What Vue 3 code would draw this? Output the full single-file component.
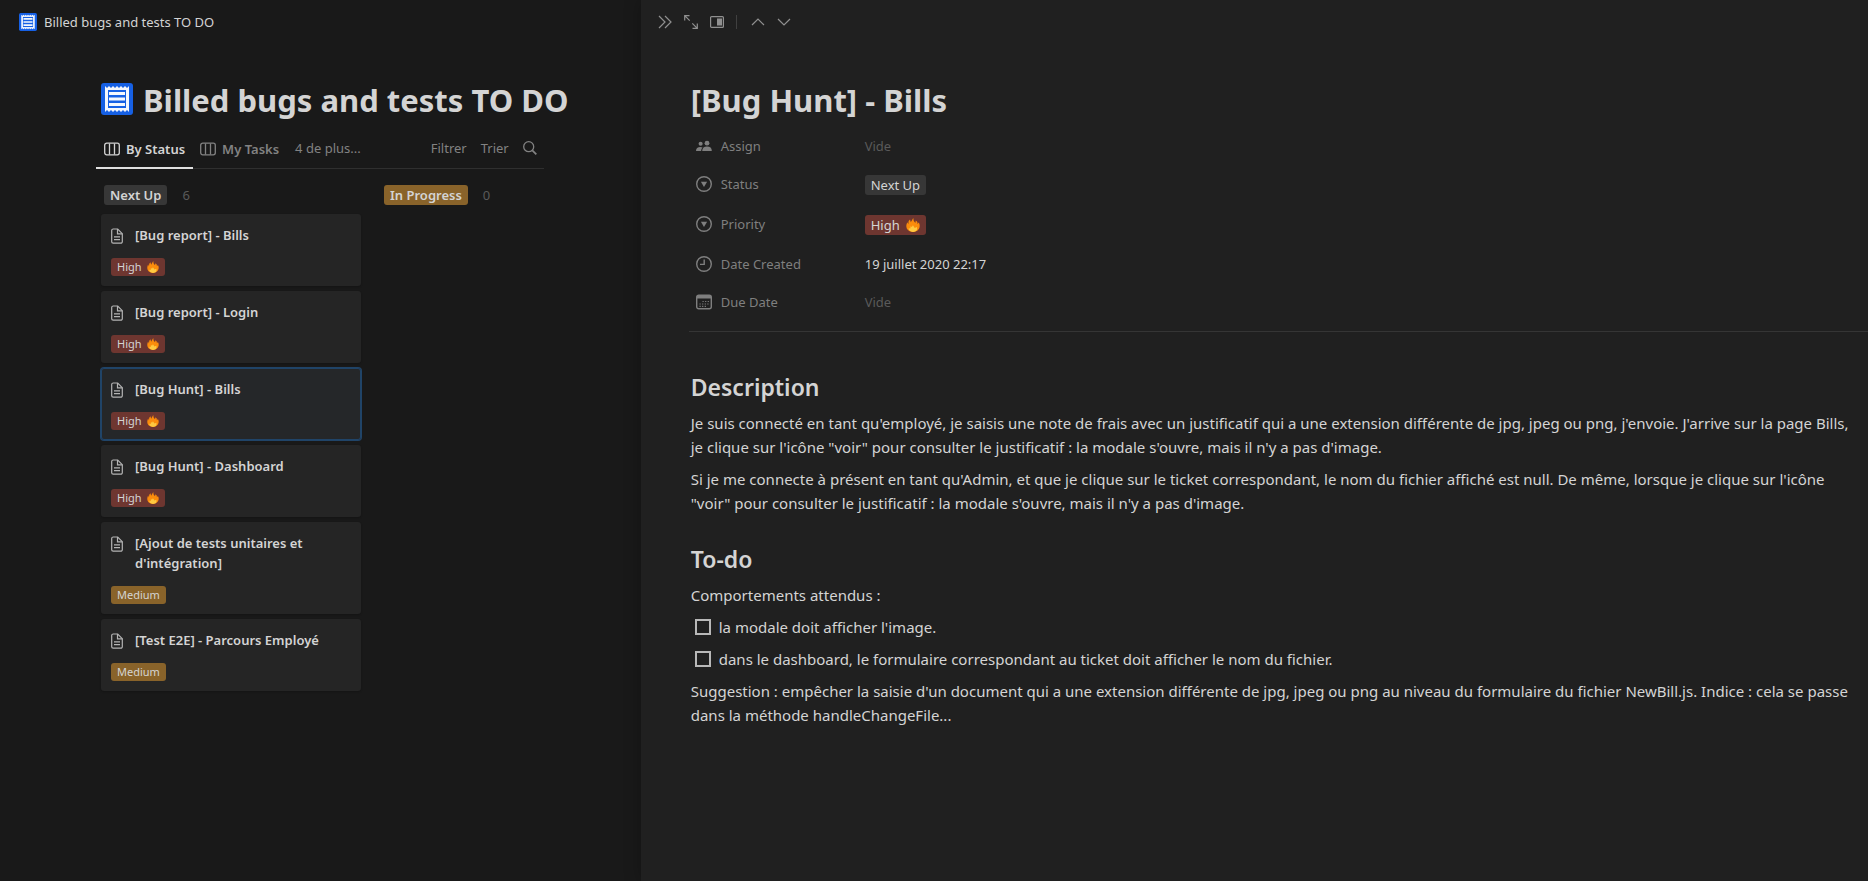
<script setup>
import { ref } from 'vue'

const cards = [
  { id: 1, title: '[Bug report] - Bills', priority: 'High' },
  { id: 2, title: '[Bug report] - Login', priority: 'High' },
  { id: 3, title: '[Bug Hunt] - Bills', priority: 'High' },
  { id: 4, title: '[Bug Hunt] - Dashboard', priority: 'High' },
  { id: 5, title: "[Ajout de tests unitaires et d'intégration]", priority: 'Medium' },
  { id: 6, title: '[Test E2E] - Parcours Employé', priority: 'Medium' },
]
const selected = ref(3)

const todos = ref([
  { id: 'todo-image', text: "la modale doit afficher l'image.", done: false },
  {
    id: 'todo-file',
    text: 'dans le dashboard, le formulaire correspondant au ticket doit afficher le nom du fichier.',
    done: false,
  },
])
</script>

<template>
  <div class="app">
    <svg class="defs" aria-hidden="true">
      <symbol id="receipt" viewBox="0 0 32 32">
        <rect width="32" height="32" rx="3" fill="#1660e4" />
        <path
          d="M4 3l2 2 2-2 2 2 2-2 2 2 2-2 2 2 2-2 2 2 2-2 2 2 2-2v26l-2-2-2 2-2-2-2 2-2-2-2 2-2-2-2 2-2-2-2 2-2-2-2 2z"
          fill="#f4f7fd"
        />
        <rect x="7" y="7" width="18" height="18" fill="#1660e4" />
        <path d="M8 10.500h16M8 16h16M8 21.500h16" stroke="#f4f7fd" stroke-width="3" />
      </symbol>
      <symbol id="fire" viewBox="0 0 16 16">
        <path
          d="M8 16C3.500 16 .6 13.300.4 9.800.3 8 .8 6 1.600 4.800l1 2.400L3 3.500l1.600-1.800.9 3.200L8.300 0l.5 3.200 1.900 2.600.5-2.900 1.800 1.700.2 2.300 1.400-1.700c.9 1.500 1.200 3 1 4.600C15.200 13.400 12.400 16 8 16z"
          fill="#fb8c0c"
        />
        <path
          d="M8 15.900c-3.200 0-5-1.600-5-4.100l1.900.3.400-2.700 1.400 1 1.200-2.100 2.100 3.100 2.300-1c1.400 3-.6 5.500-4.300 5.500z"
          fill="#fec941"
        />
      </symbol>
      <symbol id="board" viewBox="0 0 16 14">
        <g fill="none" stroke="currentColor" stroke-width="1.300">
          <rect x="0.700" y="1.200" width="14.600" height="11.600" rx="2" />
          <path d="M5.500 1.500v11M10.500 1.500v11" />
        </g>
      </symbol>
      <symbol id="page" viewBox="0 0 12 16">
        <g fill="none" stroke="currentColor" stroke-width="1.200">
          <path d="M2.400 1h4.300L11.300 5.700v8a1.500 1.500 0 0 1-1.500 1.500H2.200a1.500 1.500 0 0 1-1.500-1.500V2.500A1.500 1.500 0 0 1 2.400 1z" />
          <path d="M6.500 1v4.900h4.800M3 8.800h6M3 11.600h6" />
        </g>
      </symbol>
      <symbol id="select" viewBox="0 0 16 16">
        <circle cx="8" cy="8" r="7.300" fill="none" stroke="currentColor" stroke-width="1.400" />
        <path d="M4.900 5.700h6.200L8 10.900z" fill="currentColor" />
      </symbol>
    </svg>

    <main class="board">
      <header class="crumbs">
        <a href="#" class="crumb">
          <svg class="crumb-icon" aria-hidden="true"><use href="#receipt" /></svg>
          Billed bugs and tests TO DO
        </a>
      </header>

      <div class="board-body">
        <h1 class="board-title">
          <svg class="board-icon" aria-hidden="true"><use href="#receipt" /></svg>
          Billed bugs and tests TO DO
        </h1>

        <nav class="views">
          <button type="button" class="view active">
            <svg class="view-icon" aria-hidden="true"><use href="#board" /></svg>By Status
          </button>
          <button type="button" class="view">
            <svg class="view-icon" aria-hidden="true"><use href="#board" /></svg>My Tasks
          </button>
          <button type="button" class="more">4 de plus...</button>
          <span class="spacer"></span>
          <button type="button" class="tool">Filtrer</button>
          <button type="button" class="tool">Trier</button>
          <button type="button" class="tool search" aria-label="Rechercher">
            <svg width="14" height="14" viewBox="0 0 14 14" fill="none" stroke="currentColor" aria-hidden="true">
              <circle cx="5.700" cy="5.700" r="5" stroke-width="1.300" />
              <path d="M9.300 9.300l4 4" stroke-width="1.800" />
            </svg>
          </button>
        </nav>

        <div class="columns">
          <section class="column">
            <h2 class="column-head"><span class="tag gray">Next Up</span><span class="count">6</span></h2>
            <a
              v-for="card in cards"
              :key="card.id"
              href="#"
              class="card"
              :class="{ selected: card.id === selected }"
              @click.prevent="selected = card.id"
            >
              <span class="card-title">
                <svg class="page-icon" aria-hidden="true"><use href="#page" /></svg>
                <span>{{ card.title }}</span>
              </span>
              <span class="tag small" :class="card.priority === 'High' ? 'red' : 'orange'">
                {{ card.priority }}
                <svg v-if="card.priority === 'High'" class="fire" aria-hidden="true"><use href="#fire" /></svg>
              </span>
            </a>
          </section>
          <section class="column">
            <h2 class="column-head"><span class="tag orange">In Progress</span><span class="count">0</span></h2>
          </section>
        </div>
      </div>
    </main>

    <aside class="peek">
      <div class="peek-bar">
        <button type="button" aria-label="Fermer">
          <svg width="14" height="14" viewBox="0 0 14 14"><path d="M1 1l6 6-6 6M7 1l6 6-6 6" /></svg>
        </button>
        <button type="button" aria-label="Ouvrir en pleine page">
          <svg width="14" height="14" viewBox="0 0 14 14">
            <path d="M.7 5.500V.7h4.800M.7.7l5 5M8.500 13.300h4.800V8.500M13.300 13.300l-5-5" />
          </svg>
        </button>
        <button type="button" aria-label="Mode d'affichage">
          <svg width="14" height="14" viewBox="0 0 14 14">
            <rect x="0.600" y="1.600" width="12.800" height="10.800" rx="1" />
            <path d="M7 3.500h5v7H7z" class="solid" />
          </svg>
        </button>
        <span class="bar-divider"></span>
        <button type="button" aria-label="Page précédente">
          <svg width="14" height="14" viewBox="0 0 14 14"><path d="M1 10l6-6 6 6" /></svg>
        </button>
        <button type="button" aria-label="Page suivante">
          <svg width="14" height="14" viewBox="0 0 14 14"><path d="M1 4l6 6 6-6" /></svg>
        </button>
      </div>

      <article class="page">
        <h1 class="page-title">[Bug Hunt] - Bills</h1>

        <dl class="props">
          <div class="prop">
            <dt>
              <svg class="prop-icon" viewBox="0 0 18 16" fill="currentColor" aria-hidden="true">
                <circle cx="5.200" cy="5.500" r="2.300" />
                <circle cx="12.400" cy="4.800" r="2.700" />
                <path d="M0 13.500c0-2.900 1.800-4.300 4.800-4.300 1 0 1.900.2 2.600.6-1 .9-1.500 2.100-1.600 3.700z" />
                <path d="M7 13.500c0-3.200 2-4.800 5.400-4.800s5.400 1.600 5.400 4.800z" />
              </svg>
              Assign
            </dt>
            <dd class="empty">Vide</dd>
          </div>
          <div class="prop">
            <dt><svg class="prop-icon" aria-hidden="true"><use href="#select" /></svg>Status</dt>
            <dd class="tagged"><span class="tag gray plain">Next Up</span></dd>
          </div>
          <div class="prop">
            <dt><svg class="prop-icon" aria-hidden="true"><use href="#select" /></svg>Priority</dt>
            <dd class="tagged">
              <span class="tag red plain">High <svg class="fire big" aria-hidden="true"><use href="#fire" /></svg></span>
            </dd>
          </div>
          <div class="prop">
            <dt>
              <svg class="prop-icon" viewBox="0 0 16 16" fill="none" stroke="currentColor" stroke-width="1.400" aria-hidden="true">
                <circle cx="8" cy="8" r="7.300" />
                <path d="M8.200 3.500v4.900H4" />
              </svg>
              Date Created
            </dt>
            <dd>19 juillet 2020 22:17</dd>
          </div>
          <div class="prop">
            <dt>
              <svg class="prop-icon" viewBox="0 0 16 16" fill="none" stroke="currentColor" aria-hidden="true">
                <rect x="0.700" y="1.200" width="14.600" height="13.600" rx="2" stroke-width="1.400" />
                <path d="M1 3h14" stroke-width="3" />
                <path d="M6.500 7.500h6.500M3.500 10h9.500M3.500 12.300h7" stroke-width="1.200" stroke-dasharray="1.200 1.400" />
              </svg>
              Due Date
            </dt>
            <dd class="empty">Vide</dd>
          </div>
        </dl>

        <div class="content">
          <h2>Description</h2>
          <p>
            Je suis connecté en tant qu'employé, je saisis une note de frais avec un justificatif qui a une extension
            différente de jpg, jpeg ou png, j'envoie. J'arrive sur la page Bills, je clique sur l'icône "voir" pour
            consulter le justificatif : la modale s'ouvre, mais il n'y a pas d'image.
          </p>
          <p>
            Si je me connecte à présent en tant qu'Admin, et que je clique sur le ticket correspondant, le nom du
            fichier affiché est null. De même, lorsque je clique sur l'icône "voir" pour consulter le justificatif : la
            modale s'ouvre, mais il n'y a pas d'image.
          </p>
          <h2>To-do</h2>
          <p>Comportements attendus :</p>
          <div v-for="todo in todos" :key="todo.id" class="todo">
            <input :id="todo.id" v-model="todo.done" type="checkbox" />
            <label :for="todo.id">{{ todo.text }}</label>
          </div>
          <p>
            Suggestion : empêcher la saisie d'un document qui a une extension différente de jpg, jpeg ou png au niveau
            du formulaire du fichier NewBill.js. Indice : cela se passe dans la méthode handleChangeFile...
          </p>
        </div>
      </article>
    </aside>
  </div>
</template>

<style>
body {
  background: #191919;
}
</style>

<style scoped>
.app {
  display: grid;
  grid-template-columns: minmax(0, 343fr) minmax(0, 657fr);
  min-height: 100vh;
  background: #191919;
  color: #d4d4d4;
  font: 13px/20px "Noto Sans", "Open Sans", sans-serif;
}
.defs {
  position: absolute;
  width: 0;
  height: 0;
}
h1,
h2,
p,
dl,
dd {
  margin: 0;
}
button {
  padding: 0;
  border: 0;
  background: none;
  color: inherit;
  font: inherit;
  cursor: pointer;
}
a {
  color: inherit;
  text-decoration: none;
}
svg {
  flex: none;
}

/* Board */
.crumbs {
  display: flex;
  align-items: center;
  height: 44px;
  padding-left: 19px;
}
.crumb {
  display: flex;
  align-items: center;
  gap: 7px;
}
.crumb-icon {
  width: 18px;
  height: 18px;
}
.board-body {
  padding: 34px 97px 0 96px;
}
.board-title {
  display: flex;
  align-items: center;
  gap: 10px;
  padding-left: 5px;
  font-size: 31px;
  line-height: 44px;
  font-weight: 700;
  white-space: nowrap;
}
.board-icon {
  width: 32px;
  height: 32px;
  margin-bottom: 2px;
}
.views {
  display: flex;
  height: 40px;
  margin-top: 6px;
  border-bottom: 1px solid #2f2f2f;
  color: #828282;
  white-space: nowrap;
}
.view {
  display: flex;
  align-items: center;
  gap: 6px;
  height: 41px;
  padding: 2px 8px 0 7px;
  border-bottom: 2px solid transparent;
  font-weight: 600;
}
.view.active {
  border-bottom-color: #e0e0e0;
  color: #d4d4d4;
  padding-left: 8px;
}
.view-icon {
  width: 16px;
  height: 14px;
}
.more {
  margin-left: 8px;
}
.spacer {
  flex: 1;
}
.tool {
  margin-left: 14px;
}
.search {
  display: flex;
  align-items: center;
  margin-right: 7px;
}
.columns {
  display: flex;
  gap: 23px;
  padding: 12px 5px 0;
}
.column {
  display: flex;
  flex: none;
  flex-direction: column;
  gap: 5px;
  width: 260px;
}
.column:last-child {
  flex: 1;
  width: auto;
}
.column-head {
  display: flex;
  align-items: center;
  gap: 15px;
  height: 28px;
  padding-left: 3px;
  font-size: 13px;
  line-height: 20px;
}
.column:last-child .column-head {
  padding-left: 0;
}
.count {
  color: #5a5a5a;
  font-weight: 400;
}
.tag {
  display: inline-flex;
  align-items: center;
  gap: 6px;
  height: 20px;
  padding: 0 6px;
  border-radius: 3px;
  font-weight: 600;
  white-space: nowrap;
}
.tag.plain {
  font-weight: 400;
}
.tag.small {
  height: 18px;
  gap: 5px;
  font-size: 11px;
  line-height: 18px;
  font-weight: 400;
}
.gray {
  background: #373737;
}
.red {
  background: #6e3630;
}
.orange {
  background: #89632a;
}
.fire {
  width: 12px;
  height: 12px;
}
.fire.big {
  width: 14px;
  height: 14px;
}
.card {
  display: flex;
  flex-direction: column;
  align-items: flex-start;
  gap: 13px;
  padding: 11px 10px 10px;
  border-radius: 3px;
  background: #252525;
  box-shadow: 0 1px 2px rgba(0, 0, 0, 0.2);
}
.card.selected {
  background: #252729;
  box-shadow: 0 0 0 1px #204468, inset 0 0 0 1px #204468;
}
.card-title {
  display: flex;
  gap: 12px;
  font-weight: 600;
}
.page-icon {
  width: 12px;
  height: 16px;
  margin-top: 3px;
  color: #b4b4b4;
}

/* Side peek */
.peek {
  background: #202020;
  box-shadow: 0 0 16px rgba(0, 0, 0, 0.25);
}
.peek-bar {
  display: flex;
  align-items: center;
  gap: 12px;
  height: 44px;
  padding-left: 17px;
  color: #909090;
}
.peek-bar button {
  display: flex;
}
.peek-bar svg {
  fill: none;
  stroke: currentColor;
  stroke-width: 1.200;
}
.peek-bar .solid {
  fill: currentColor;
  stroke: none;
}
.bar-divider {
  width: 1px;
  height: 14px;
  margin-right: 2px;
  background: #404040;
}
.page {
  padding: 34px 0 40px 48px;
}
.page-title {
  padding-left: 2px;
  font-size: 31px;
  line-height: 44px;
  font-weight: 700;
}
.props {
  display: flex;
  flex-direction: column;
  gap: 4px;
  padding: 7px 0 12px 7px;
  border-bottom: 1px solid #353535;
}
.prop {
  display: flex;
  align-items: flex-start;
}
.prop dt {
  display: flex;
  align-items: center;
  gap: 9px;
  width: 169px;
  height: 34px;
  color: #7f7f7f;
}
.prop-icon {
  width: 16px;
  height: 16px;
}
.prop dd {
  display: flex;
  align-items: center;
  height: 34px;
}
.prop dd.tagged {
  height: 36px;
}
.prop dd.empty {
  color: #5a5a5a;
}
.content {
  display: flex;
  flex-direction: column;
  gap: 8px;
  padding: 39px 8px 0 2px;
  font-size: 15px;
  line-height: 24px;
}
.content h2 {
  font-size: 23px;
  line-height: 32px;
  font-weight: 600;
}
.content p + h2 {
  margin-top: 20px;
}
.todo {
  display: flex;
  align-items: center;
  gap: 8px;
  padding-left: 4px;
}
.todo input {
  appearance: none;
  box-sizing: border-box;
  width: 16px;
  height: 16px;
  margin: 0;
  border: 2px solid #b8b8b8;
}
.todo input:checked {
  background: #2383e2;
}
</style>
